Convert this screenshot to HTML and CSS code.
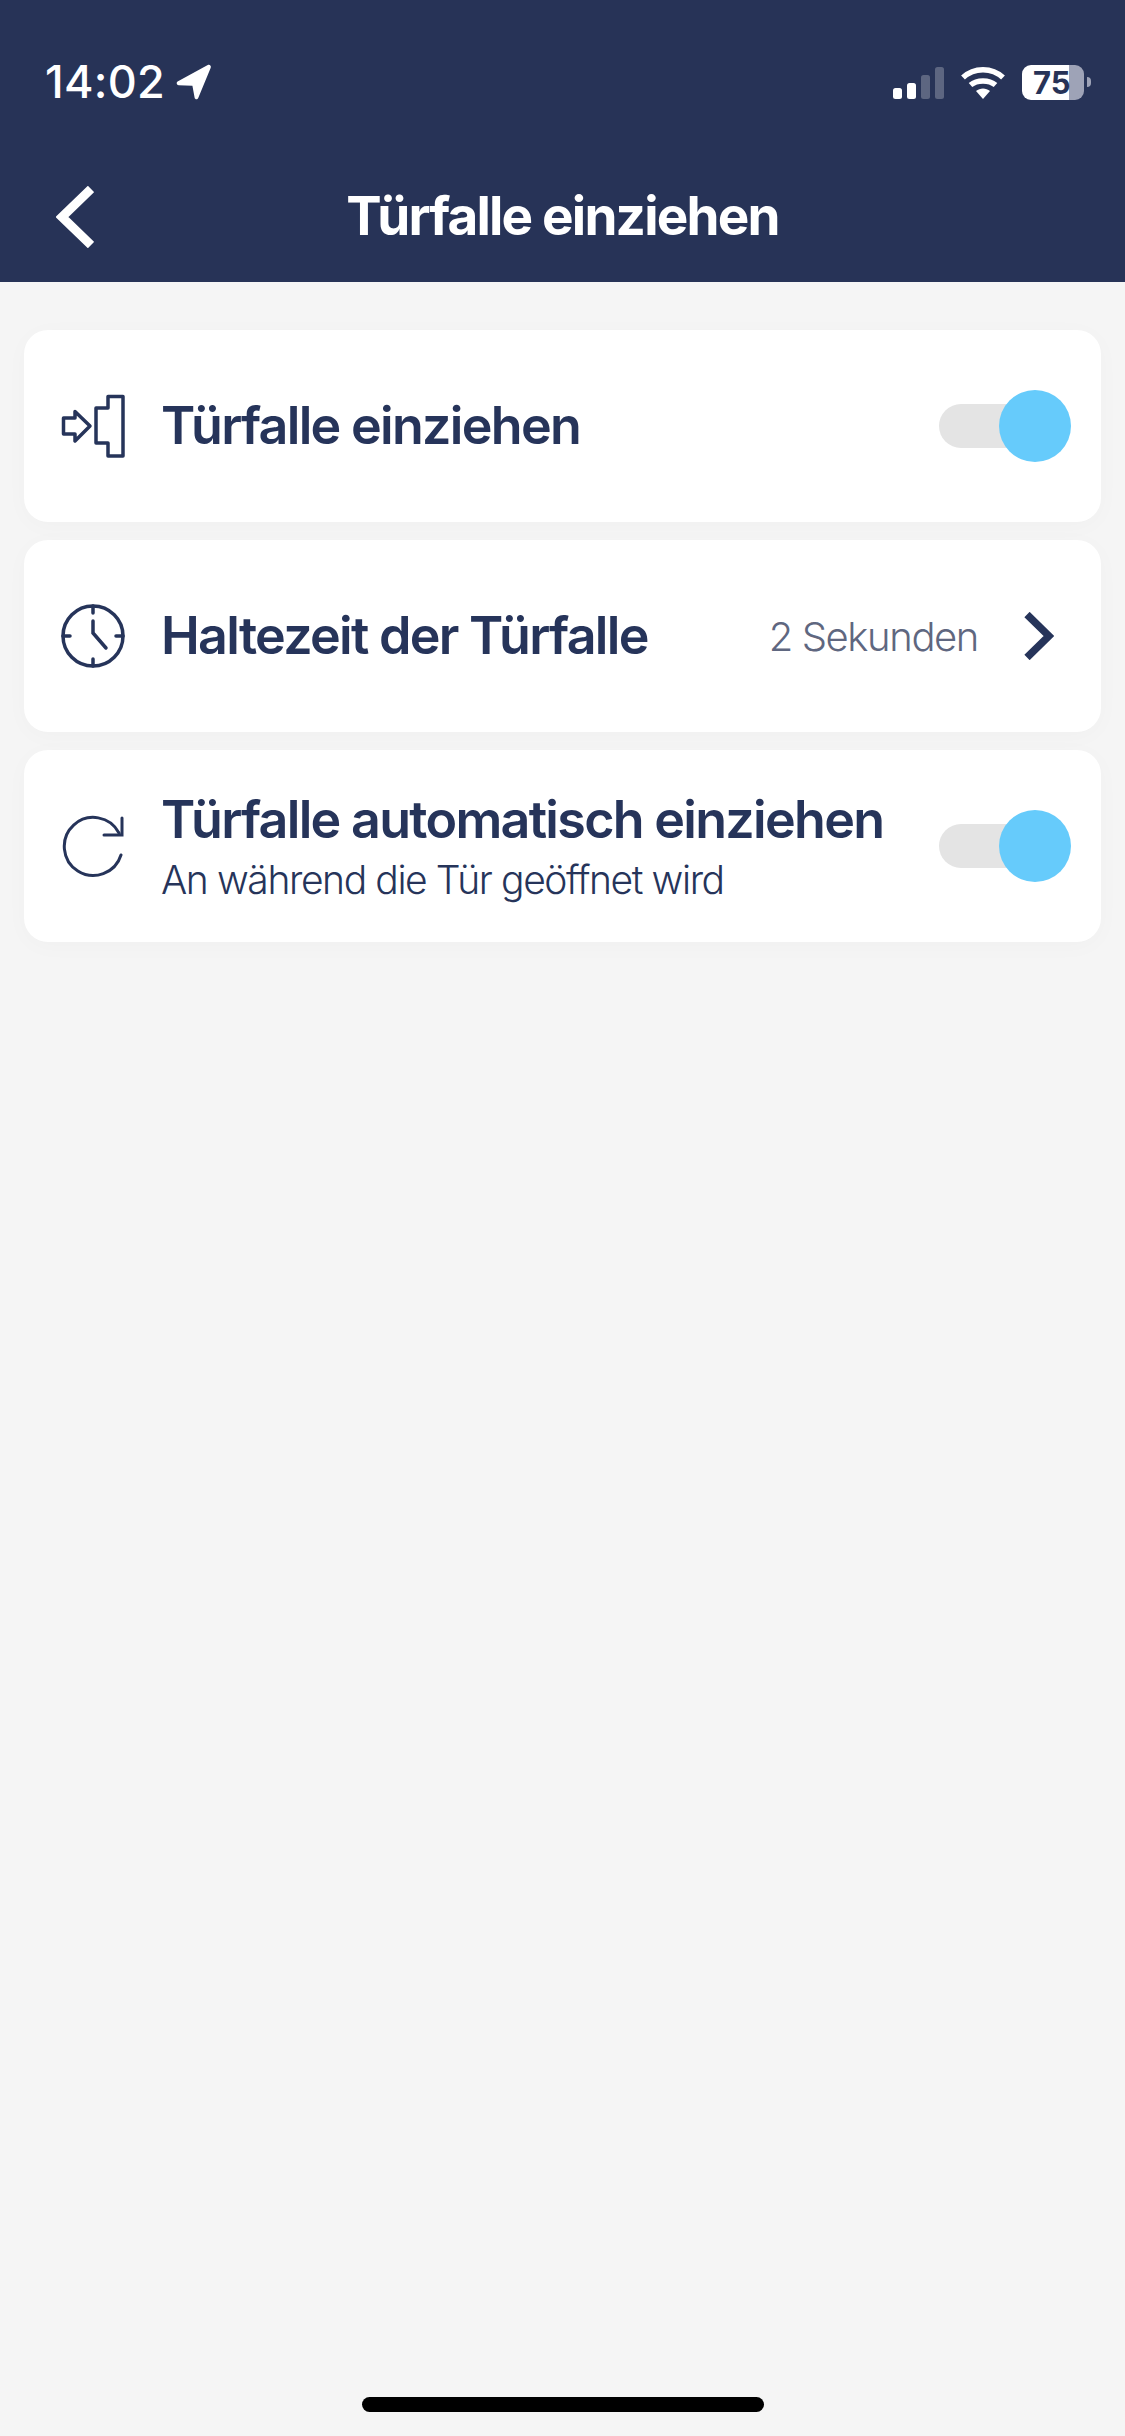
FILE: index.html
```html
<!DOCTYPE html>
<html lang="de">
<head>
<meta charset="utf-8">
<title>Türfalle einziehen</title>
<link rel="stylesheet" href="styles.css">
</head>
<body>
<div class="page">
  <header class="header">
    <div class="status">
      <div class="status-left">
        <span class="time">14:02</span>
        <svg class="loc" width="36" height="36" viewBox="0 0 34 34"><path d="M1.500 16.500 30 1c1.700-.9 3.500.7 2.800 2.500L21 32c-.7 1.700-3 1.600-3.400-.2L15.500 20.500 2.500 20c-1.800-.1-2.500-2.500-1-3.500Z" fill="#fff"/></svg>
      </div>
      <div class="status-right">
        <svg class="signal" width="51" height="32" viewBox="0 0 51 32">
          <rect x="0" y="21" width="9" height="11" rx="2.500" fill="#fff"/>
          <rect x="14" y="16" width="9" height="16" rx="2.500" fill="#fff"/>
          <rect x="28" y="8" width="9" height="24" rx="2.500" fill="#fff" opacity=".25"/>
          <rect x="42" y="0" width="9" height="32" rx="2.500" fill="#fff" opacity=".25"/>
        </svg>
        <svg class="wifi" width="46" height="33" viewBox="0 0 46 33">
          <path d="M3 11.500C14 1 32 1 43 11.500" fill="none" stroke="#fff" stroke-width="5.500"/>
          <path d="M10.500 19C17 13.500 29 13.500 35.500 19" fill="none" stroke="#fff" stroke-width="5.500"/>
          <path d="M16 25c4-3.500 10-3.500 14 0l-7 8Z" fill="#fff"/>
        </svg>
        <div class="battery"><span class="battery-text">75</span></div>
        <span class="battery-nub"></span>
      </div>
    </div>
    <nav class="nav">
      <svg class="back" width="38" height="62" viewBox="0 0 38 62"><path d="M35 3 6 31l29 28" fill="none" stroke="#fff" stroke-width="9"/></svg>
      <h1 class="title">Türfalle einziehen</h1>
      <span></span>
    </nav>
  </header>

  <main class="list">
    <section class="card">
      <svg class="icon" width="66" height="66" viewBox="0 0 66 66" fill="none" stroke="#26345a" stroke-width="3.500" stroke-linejoin="round">
        <path d="M48 3.500H63V63H48V50H36V15H48Z"/>
        <path d="M3.500 25H15V18.500L30 33 15 48V41H3.500Z"/>
      </svg>
      <div class="text"><div class="label">Türfalle einziehen</div></div>
      <div class="switch"><span class="knob"></span></div>
    </section>

    <section class="card">
      <svg class="icon" width="66" height="66" viewBox="0 0 66 66" fill="none" stroke="#26345a" stroke-width="3.500" stroke-linecap="round">
        <circle cx="33" cy="33" r="30"/>
        <path d="M33 3v7M33 56v7M3 33h7M56 33h7"/>
        <path d="M33 18v12l13 15"/>
      </svg>
      <div class="text"><div class="label">Haltezeit der Türfalle</div></div>
      <span class="value">2 Sekunden</span>
      <svg class="chevron" width="30" height="48" viewBox="0 0 30 48"><path d="M3 2.500 25 24 3 45.500" fill="none" stroke="#26345a" stroke-width="7.500"/></svg>
    </section>

    <section class="card">
      <svg class="icon" width="66" height="66" viewBox="0 0 66 66" fill="none" stroke="#26345a" stroke-width="3" stroke-linecap="round">
        <path d="M61 42A29 29 0 1 1 59 20"/>
        <path d="M62 5V22H44"/>
      </svg>
      <div class="text">
        <div class="label">Türfalle automatisch einziehen</div>
        <div class="sub">An während die Tür geöffnet wird</div>
      </div>
      <div class="switch"><span class="knob"></span></div>
    </section>
  </main>

  <footer class="home"><span class="home-bar"></span></footer>
</div>
</body>
</html>
```
FILE: styles.css
```css
* { box-sizing: border-box; }
html, body { margin: 0; padding: 0; }
body { font-family: Inter, "Liberation Sans", sans-serif; background: #f5f5f5; color: #26345a; }
.page { width: 1125px; height: 2436px; display: flex; flex-direction: column; overflow: hidden; }

.header { height: 282px; background: #273357; color: #fff; flex: none; padding-top: 64px; }
.status { display: flex; justify-content: space-between; padding: 0 34px 0 45px; height: 36px; }
.status-left { display: flex; align-items: center; gap: 11px; }
.time { font-size: 45px; font-weight: 500; line-height: 36px; letter-spacing: .3px; }
.status-right { display: flex; align-items: center; }
.signal { margin-right: 16px; margin-top: 2px; }
.wifi { margin-right: 16px; }
.battery { width: 62px; height: 35px; border-radius: 9px; background: linear-gradient(90deg, #fff 47px, #9ea3b7 47px); display: flex; align-items: center; padding-left: 11px; }
.battery-text { font-size: 31px; font-weight: 700; color: #273357; line-height: 35px; letter-spacing: 0; }
.battery-nub { width: 4px; height: 10px; margin-left: 3px; background: #9ea3b7; border-radius: 0 5px 5px 0; }

.nav { display: grid; grid-template-columns: 1fr auto 1fr; align-items: center; margin-top: 84px; padding-left: 56px; padding-right: 56px; height: 62px; }
.back { display: block; }
.title { margin: 0; font-size: 53px; font-weight: 700; line-height: 65px; letter-spacing: -1.800px; }

.list { display: flex; flex-direction: column; gap: 18px; padding: 48px 24px 0; }
.card { height: 192px; background: #fff; border-radius: 24px; box-shadow: 0 4px 24px rgba(0, 0, 0, .025); display: flex; align-items: center; padding: 0 36px; }
.icon { flex: none; margin-right: 35px; }
.text { flex: 1; min-width: 0; }
.label { font-size: 52px; font-weight: 600; line-height: 58px; letter-spacing: -1.700px; white-space: nowrap; }
.sub { font-size: 39px; font-weight: 300; line-height: 44px; letter-spacing: -1.400px; margin-top: 9px; white-space: nowrap; }
.value { font-size: 40px; font-weight: 300; color: #5f6780; letter-spacing: -1.400px; margin-right: 46px; }
.chevron { flex: none; margin-right: 11px; }

.switch { position: relative; width: 126px; height: 44px; border-radius: 22px; background: #e4e4e4; flex: none; }
.knob { position: absolute; right: -6px; top: -14px; width: 72px; height: 72px; border-radius: 50%; background: #66cbfb; }

.home { margin-top: auto; height: 39px; display: flex; justify-content: center; flex: none; }
.home-bar { width: 402px; height: 15px; border-radius: 8px; background: #000; }
```
